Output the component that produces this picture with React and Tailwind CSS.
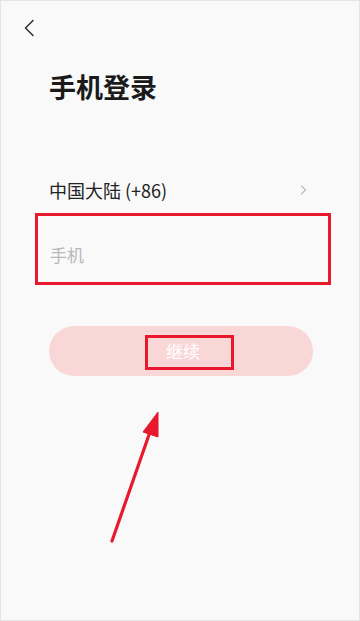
import { useState } from 'react';

const font = { fontFamily: '"Noto Sans CJK SC", "Noto Sans", sans-serif' };

export default function App() {
  const [phone, setPhone] = useState('');

  return (
    <div className="relative w-[360px] h-[621px] bg-[#f9f9f9] border border-[#e4e4e4] overflow-hidden" style={font}>
      {/* back */}
      <div className="pl-[22px] pt-[18px]">
        <svg width="12" height="18" viewBox="0 0 12 18" fill="none">
          <path d="M10 1.5 L2.5 9 L10 16.5" stroke="#333" strokeWidth="1.6" strokeLinecap="round" strokeLinejoin="round" />
        </svg>
      </div>

      <h1 className="mt-[30px] pl-[48px] text-[27px] leading-[40px] font-bold text-[#1a1a1a]">手机登录</h1>

      {/* country */}
      <div className="mt-[69px] flex items-center justify-between pl-[48px] pr-[52px] h-[28px]">
        <span className="text-[18px] text-[#222]">中国大陆 (+86)</span>
        <svg width="7" height="10" viewBox="0 0 7 10" fill="none">
          <path d="M1.5 1 L5.5 5 L1.5 9" stroke="#bcbcbc" strokeWidth="1.2" strokeLinecap="round" strokeLinejoin="round" />
        </svg>
      </div>

      {/* phone input */}
      <div className="mt-[9px] ml-[34px] w-[296px] h-[72px] border-[3px] border-[#e8192c] flex items-center pl-[12px]">
        <input
          value={phone}
          onChange={(e) => setPhone(e.target.value)}
          placeholder="手机"
          className="w-full bg-transparent outline-none text-[17px] text-[#222] placeholder:text-[#b8b8b8] mt-[12px]"
        />
      </div>

      {/* continue */}
      <div className="mt-[41px] mx-[48px] relative">
        <button className="w-[264px] h-[50px] rounded-full bg-[#fad7d7] text-white text-[17px] flex items-center justify-center">
          <span className="ml-[4px]">继续</span>
        </button>
        <div className="absolute left-[96px] top-[9px] w-[89px] h-[35px] border-[3px] border-[#e8192c]"></div>
      </div>

      {/* arrow */}
      <svg className="absolute left-0 top-0" width="360" height="621" viewBox="0 0 360 621" fill="none">
        <path d="M111 540 L150 428" stroke="#e8192c" strokeWidth="3.2" strokeLinecap="round" />
        <path d="M157 411 L142 431 L157 436 Z" fill="#e8192c" stroke="#e8192c" strokeWidth="1" strokeLinejoin="round" />
      </svg>
    </div>
  );
}
